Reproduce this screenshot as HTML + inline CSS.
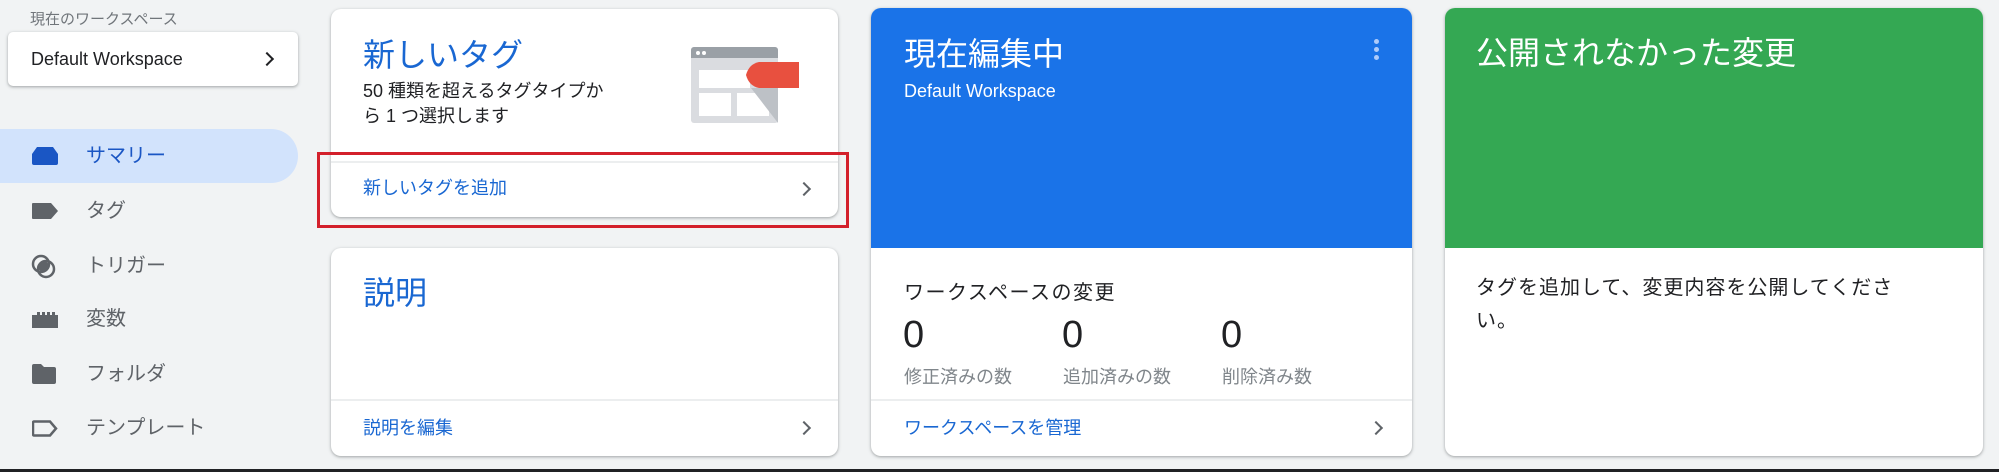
<!DOCTYPE html>
<html><head><meta charset="utf-8"><style>
*{margin:0;padding:0;box-sizing:border-box}
body{width:1999px;height:472px;background:#f1f3f4;position:relative;overflow:hidden;font-family:"Liberation Sans","Noto Sans CJK JP",sans-serif;color:#202124}
.a{position:absolute;white-space:nowrap}
.card{position:absolute;background:#fff;border-radius:10px;box-shadow:0 1px 2px rgba(60,64,67,.3),0 1px 3px 1px rgba(60,64,67,.12);overflow:hidden}
.t{font-size:32px;color:#1967d2;line-height:1}
.lk{font-size:18px;color:#1967d2;line-height:1}
.chev{position:absolute;width:10px;height:10px;border-right:2px solid #5f6368;border-top:2px solid #5f6368;transform:rotate(45deg)}
.div{position:absolute;left:0;right:0;height:2px;background:#eceeef}
.nav{position:absolute;left:86px;font-size:20px;color:#5f6368;line-height:1}
</style></head><body>
<div class="a" style="left:30px;top:8px;font-size:15px;color:#70757a">現在のワークスペース</div>
<div class="card" style="left:8px;top:32px;width:290px;height:54px;border-radius:5px">
 <div class="a" style="left:23px;top:17px;font-size:18px;color:#202124">Default Workspace</div>
 <div class="chev" style="left:254px;top:22px;border-color:#202124;width:10px;height:10px"></div>
</div>
<div class="a" style="left:0;top:129px;width:298px;height:54px;background:#d2e3fc;border-radius:0 27px 27px 0"></div>
<svg class="a" style="left:32px;top:147px" width="26" height="18" viewBox="0 0 26 18"><path d="M5 0h16l5 7v9a2 2 0 0 1-2 2H2a2 2 0 0 1-2-2V7z" fill="#1a56c4"/></svg>
<div class="nav" style="top:146px;color:#1a56c4">サマリー</div>
<svg class="a" style="left:32px;top:203px" width="26" height="16"><path d="M0 1a1 1 0 0 1 1-1h18l7 8-7 8H1a1 1 0 0 1-1-1z" fill="#5f6368"/></svg>
<div class="nav" style="top:201px">タグ</div>
<svg class="a" style="left:31px;top:254px" width="26" height="26"><circle cx="10" cy="10" r="8" fill="none" stroke="#5f6368" stroke-width="2.5"/><circle cx="15" cy="15" r="8" fill="none" stroke="#5f6368" stroke-width="2.5"/><circle cx="12.5" cy="12.5" r="5.5" fill="#5f6368"/></svg>
<div class="nav" style="top:256px">トリガー</div>
<svg class="a" style="left:32px;top:312px" width="26" height="16"><path d="M0 3h5V0h3v3h2V0h3v3h2V0h3v3h2V0h3v3h3v13H0z" fill="#5f6368"/></svg>
<div class="nav" style="top:309px">変数</div>
<svg class="a" style="left:32px;top:364px" width="24" height="20"><path d="M0 2a2 2 0 0 1 2-2h7l3 3h10a2 2 0 0 1 2 2v13a2 2 0 0 1-2 2H2a2 2 0 0 1-2-2z" fill="#5f6368"/></svg>
<div class="nav" style="top:364px">フォルダ</div>
<svg class="a" style="left:32px;top:420px" width="26" height="17"><path d="M2 1.5h16l6 7-6 7H2a1 1 0 0 1-1-1V2.5a1 1 0 0 1 1-1z" fill="none" stroke="#5f6368" stroke-width="2.5"/></svg>
<div class="nav" style="top:418px">テンプレート</div>

<div class="card" style="left:331px;top:9px;width:507px;height:208px">
 <div class="a t" style="left:32px;top:30px">新しいタグ</div>
 <div class="a" style="left:32px;top:70px;font-size:18px;line-height:25px;color:#202124">50 種類を超えるタグタイプか<br>ら 1 つ選択します</div>
 <svg class="a" style="left:360px;top:38px" width="110" height="78"><rect x="0" y="0" width="87" height="76" rx="3" fill="#dadce0"/><path d="M0 3a3 3 0 0 1 3-3h81a3 3 0 0 1 3 3v8H0z" fill="#9aa0a6"/><circle cx="7" cy="6" r="2" fill="#fff"/><circle cx="13" cy="6" r="2" fill="#fff"/><rect x="8" y="23" width="51" height="18" fill="#fff"/><rect x="8" y="46" width="32" height="23" fill="#fff"/><rect x="46" y="46" width="32" height="23" fill="#fff"/><path d="M60 41l27 0 0 35z" fill="#bdc1c6"/><path d="M68 15h40v26H68q-10-2-13-13 3-11 13-13z" fill="#e8503f"/></svg>
 <div class="div" style="top:152px"></div>
 <div class="a lk" style="left:32px;top:170px">新しいタグを追加</div>
 <div class="chev" style="left:468px;top:175px"></div>
</div>
<div class="a" style="left:317px;top:152px;width:532px;height:76px;border:3px solid #d3202b"></div>

<div class="card" style="left:331px;top:248px;width:507px;height:208px">
 <div class="a t" style="left:32px;top:29px">説明</div>
 <div class="div" style="top:151px"></div>
 <div class="a lk" style="left:32px;top:171px">説明を編集</div>
 <div class="chev" style="left:468px;top:175px"></div>
</div>

<div class="card" style="left:871px;top:8px;width:541px;height:448px">
 <div class="a" style="left:0;top:0;width:541px;height:240px;background:#1a73e8"></div>
 <div class="a t" style="left:33px;top:30px;color:#fff">現在編集中</div>
 <div class="a" style="left:33px;top:73px;font-size:18px;color:#fff">Default Workspace</div>
 <div class="a" style="left:503px;top:31px;width:5px;height:5px;border-radius:50%;background:#aecbfa;box-shadow:0 8px 0 #aecbfa,0 16px 0 #aecbfa"></div>
 <div class="a" style="left:33px;top:268px;font-size:20px;letter-spacing:1.5px;color:#202124">ワークスペースの変更</div>
 <div class="a" style="left:32px;top:306px;font-size:38px;color:#202124">0</div>
 <div class="a" style="left:191px;top:306px;font-size:38px;color:#202124">0</div>
 <div class="a" style="left:350px;top:306px;font-size:38px;color:#202124">0</div>
 <div class="a" style="left:33px;top:355px;font-size:18px;color:#80868b">修正済みの数</div>
 <div class="a" style="left:192px;top:355px;font-size:18px;color:#80868b">追加済みの数</div>
 <div class="a" style="left:351px;top:355px;font-size:18px;color:#80868b">削除済み数</div>
 <div class="div" style="top:391px"></div>
 <div class="a lk" style="left:33px;top:411px">ワークスペースを管理</div>
 <div class="chev" style="left:500px;top:415px"></div>
</div>

<div class="card" style="left:1445px;top:8px;width:538px;height:448px">
 <div class="a" style="left:0;top:0;width:538px;height:240px;background:#34a853"></div>
 <div class="a t" style="left:31px;top:29px;color:#fff">公開されなかった変更</div>
 <div class="a" style="left:31px;top:264px;font-size:20px;letter-spacing:1px;line-height:33px;color:#202124;white-space:normal;width:432px">タグを追加して、変更内容を公開してください。</div>
</div>
<div class="a" style="left:0;top:469px;width:1999px;height:3px;background:#202124"></div>
</body></html>
